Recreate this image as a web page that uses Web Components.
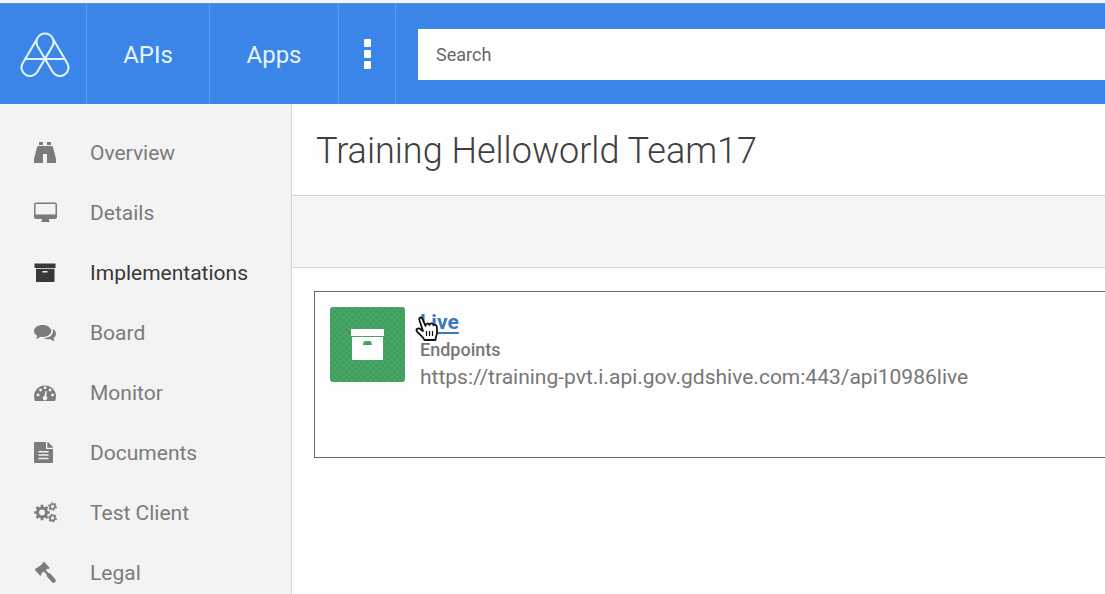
<!DOCTYPE html>
<html lang="en">
<head>
<meta charset="utf-8">
<title>Training Helloworld Team17</title>
<style>
html{overflow:hidden}
body{margin:0;font-family:Roboto,"Liberation Sans",sans-serif;color:#777;background:#fefefe}
</style>
</head>
<body>
<api-portal>
  <portal-header slot="header"></portal-header>
  <side-nav slot="nav">
    <nav-item icon="overview">Overview</nav-item>
    <nav-item icon="details">Details</nav-item>
    <nav-item icon="archive" active>Implementations</nav-item>
    <nav-item icon="board">Board</nav-item>
    <nav-item icon="monitor">Monitor</nav-item>
    <nav-item icon="documents">Documents</nav-item>
    <nav-item icon="gears">Test Client</nav-item>
    <nav-item icon="legal">Legal</nav-item>
  </side-nav>
  <page-title>Training Helloworld Team17</page-title>
  <tool-strip></tool-strip>
  <endpoint-card>
    <span slot="name">Live</span>
    <span slot="url">https://training-pvt.i.api.gov.gdshive.com:443/api10986live</span>
  </endpoint-card>
</api-portal>

<script>
const icons = {
  overview: '<path d="M5 1h4v3H5zM13 1h4v3h-4zM4 5h5v17H0v-4L3 6zM13 5h5l1 1 3 12v4h-9zM9 5h4v8H9z"/>',
  details: '<path fill-rule="evenodd" d="M2 1.500h19q2 0 2 2V16q0 2-2 2h-6v1.500l1 1.500H7l1-1.500V18H2q-2 0-2-2V3.500q0-2 2-2zM1.500 3v10.500h20V3z"/>',
  archive: '<path fill-rule="evenodd" d="M.5 2.500h21V7H.5zM2 7.700h18.500V21H2zM8.500 10v1.500h5V10z"/>',
  board: '<path d="M8.500 4c5 0 8.700 2.700 8.700 6s-3.700 6-8.700 6l-2-.2C5 17 3.500 17.700 1.500 17.700c1-.8 1.500-1.700 1.700-3C1.200 13.600 0 12 0 10c0-3.300 3.700-6 8.500-6z"/><path d="M18.500 8c2 1 3.500 2.700 3.500 4.700 0 1.700-1 3.200-2.600 4.300.2 1.300.9 2.200 1.700 3-2 0-3.600-.7-5-1.900-2.300.4-4.600.1-6.400-.8 5-.3 9.300-3 9.300-7z"/>',
  monitor: '<path fill-rule="evenodd" d="M1 20a11 11 0 1 1 20 0zM4 12.500a1.500 1.500 0 1 0 .1 3 1.500 1.500 0 0 0-.1-3zM6.500 7.500a1.500 1.500 0 1 0 .1 3 1.500 1.500 0 0 0-.1-3zM11 5.200a1.500 1.500 0 1 0 .1 3 1.500 1.500 0 0 0-.1-3zM16 7.500a1.500 1.500 0 1 0 .1 3 1.500 1.500 0 0 0-.1-3zM18.500 12.500a1.500 1.500 0 1 0 .1 3 1.500 1.500 0 0 0-.1-3zM11.600 10l-1.300 5a2.200 2.200 0 1 0 2 .3l.6-5z"/>',
  documents: '<path fill-rule="evenodd" d="M1 1h11v7h7v13q0 1-1 1H1q-1 0-1-1V2q0-1 1-1zM4.500 10v1.500h10V10zM4.500 13.300v1.500h10v-1.500zM4.500 16.700v1.500h10v-1.500z"/><path d="M13.300 1q.7 0 1.200.5l4 4q.5.5.5 1.200h-5.700z"/>',
  gears: '<g fill="none" stroke="currentColor"><circle cx="8" cy="11.500" r="4.500" stroke-width="3"/><circle cx="8" cy="11.500" r="6.600" stroke-width="2.400" pathLength="16" stroke-dasharray="1" stroke-dashoffset=".5"/><circle cx="18.500" cy="5.500" r="2.500" stroke-width="1.700"/><circle cx="18.500" cy="5.500" r="3.700" stroke-width="1.300" pathLength="12" stroke-dasharray="1"/><circle cx="18.500" cy="17" r="2.500" stroke-width="1.700"/><circle cx="18.500" cy="17" r="3.700" stroke-width="1.300" pathLength="12" stroke-dasharray="1"/></g>',
  legal: '<g fill="none" stroke="currentColor"><path d="M4 10.500l8-6" stroke-width="7"/><path d="M2 8.500l4.500 5M9.700 2l4.600 5" stroke-width="2.200" stroke-linecap="round"/><path d="M9 8l7 7.500" stroke-width="2.500"/><path d="M15 14.500l4.500 5" stroke-width="4.500" stroke-linecap="round"/></g>'
};

const define = (name, html, setup) => {
  const template = document.createElement('template');
  template.innerHTML = html;
  customElements.define(name, class extends HTMLElement {
    constructor() {
      super();
      this.attachShadow({mode: 'open'}).append(template.content.cloneNode(true));
    }
    connectedCallback() { if (setup) setup(this, this.shadowRoot); }
  });
};

define('api-portal', `
<style>
:host{display:flex;flex-direction:column;min-height:100vh}
.body{display:grid;grid-template-columns:292px minmax(0,1fr);flex:1}
main{min-width:0}
</style>
<slot name="header"></slot>
<div class="body"><slot name="nav"></slot><main><slot></slot></main></div>`);

define('portal-header', `
<style>
:host{display:block;border-top:3px solid #f4f4f4;background:#3b85e8}
header{display:flex;align-items:stretch;height:100px;border-top:1px solid #5c94dc}
nav{display:flex}
a,button{display:flex;align-items:center;justify-content:center;box-sizing:border-box;
  border:0;border-right:1px solid #5a9df1;background:none;padding:0;
  color:#e6f4ff;font:400 24px/32px Roboto,sans-serif;text-decoration:none}
.logo{width:87px;padding:2px 0 0 3px}
.apis{width:123px;padding-top:2px}
.apps{width:129px;padding-top:2px}
.more{width:57px;color:#fff}
svg{display:block}
form{flex:1;display:flex;align-items:center;padding:1px 0 0 22px}
input{flex:1;min-width:0;height:51px;box-sizing:border-box;border:0;border-radius:0;
  padding:0 18px;background:#fff;color:#555;font:400 18px/24px Roboto,sans-serif}
input::placeholder{color:#666;opacity:1}
</style>
<header>
  <nav aria-label="Primary">
    <a class="logo" href="#home" aria-label="Home">
      <svg width="50" height="46" viewBox="0 0 50 46" fill="none" stroke="#dff4ff" stroke-width="2.100">
        <path d="M17.600 14.250A8.500 8.500 0 1 1 32.400 14.250L17.400 39.750A8.500 8.500 0 1 1 2.700 31.200L17.700 5.700M17.600 14.250L32.600 39.750A8.500 8.500 0 1 0 47.300 31.200L32.300 5.700M5.500 27h39"/>
      </svg>
    </a>
    <a class="apis" href="#apis">APIs</a>
    <a class="apps" href="#apps">Apps</a>
    <button class="more" type="button" aria-label="More">
      <svg width="8" height="30" viewBox="0 0 8 30" fill="#fff"><rect x="1" width="7" height="8" rx="1"/><rect x="1" y="11" width="7" height="8" rx="1"/><rect x="1" y="22" width="7" height="8" rx="1"/></svg>
    </button>
  </nav>
  <form role="search"><input type="text" placeholder="Search" aria-label="Search"></form>
</header>`);

define('side-nav', `
<style>
:host{display:block;box-sizing:border-box;padding-top:19px;background:#f3f3f3;border-right:1px solid #d6d6d6}
</style>
<nav aria-label="API"><slot></slot></nav>`);

define('nav-item', `
<style>
:host{display:block;color:#7b7b7b}
:host([active]){color:#383838}
a{display:flex;align-items:center;gap:32px;height:60px;padding-left:34px;color:inherit;text-decoration:none;font-size:21px;line-height:28px}
svg{display:block;flex:none}
</style>
<a><svg width="24" height="24" viewBox="0 0 24 24" fill="currentColor" aria-hidden="true"></svg><span><slot></slot></span></a>`,
(host, root) => {
  root.querySelector('svg').innerHTML = icons[host.getAttribute('icon')];
  root.querySelector('a').href = '#' + host.getAttribute('icon');
});

define('page-title', `
<style>
:host{display:block;padding:25px 24px 22px;border-bottom:1px solid #d2d2d2}
h1{margin:0;font-size:36px;line-height:44px;font-weight:300;color:#404040}
</style>
<h1><slot></slot></h1>`);

define('tool-strip', `
<style>:host{display:block;height:71px;background:#f5f5f5;border-bottom:1px solid #d8d8d8}</style>`);

define('endpoint-card', `
<style>
:host{display:block;padding:23px 0 0 22px}
article{display:flex;gap:15px;box-sizing:border-box;min-height:167px;padding:15px;border:1px solid #666;border-right:0}
.tile{flex:none;width:75px;height:75px;border-radius:3px;overflow:hidden}
svg{display:block}
.text{min-width:0}
h2{position:relative;margin:0;font-size:21px;line-height:30px;font-weight:700}
a{color:#3c78be;text-underline-offset:3px;text-decoration-thickness:2px}
.pointer{position:absolute;left:-5px;top:9px}
h3{margin:0;font-size:18px;line-height:26px;font-weight:500;color:#777}
p{margin:0;font-size:21px;line-height:28px;color:#777}
</style>
<article>
  <div class="tile">
    <svg width="75" height="75" viewBox="0 0 75 75" aria-hidden="true">
      <defs><pattern id="weave" width="6" height="6" patternUnits="userSpaceOnUse"><rect width="6" height="6" fill="#46a663"/><path d="M0 1.500L1.500 0 3 1.500 1.500 3zM3 4.500L4.500 3 6 4.500 4.500 6z" fill="#3d965c"/></pattern></defs>
      <rect width="75" height="75" fill="url(#weave)"/>
      <path fill="#fff" fill-rule="evenodd" d="M21 22h33v7H21zM22 30h31v23H22zM33 38h9q0-4-3-4h-3q-3 0-3 4z"/>
    </svg>
  </div>
  <div class="text">
    <h2><a href="#live"><slot name="name"></slot></a>
      <svg class="pointer" width="24" height="26" viewBox="0 0 24 26" fill="#fff" stroke="#111" stroke-width="1.800" stroke-linejoin="round" aria-hidden="true">
        <path d="M8 15L4.500 4.500C3.500 1.200 6.500.5 7.700 3.300L10.500 10C10.500 7 13.500 6.800 14.500 9 15.500 6.800 18 7 18.500 9.300 20.500 8 22 9.500 22 12v5c0 2-1.500 4-1.500 7H9.500C8.500 20.500 4 18.500 2 15.500.5 13 3 11.500 5.500 13.300z"/>
        <path d="M11.500 15v5M14.500 15v5M17.500 15v5" stroke-width="1.200"/>
      </svg>
    </h2>
    <h3>Endpoints</h3>
    <p><slot name="url"></slot></p>
  </div>
</article>`);
</script>
</body>
</html>
